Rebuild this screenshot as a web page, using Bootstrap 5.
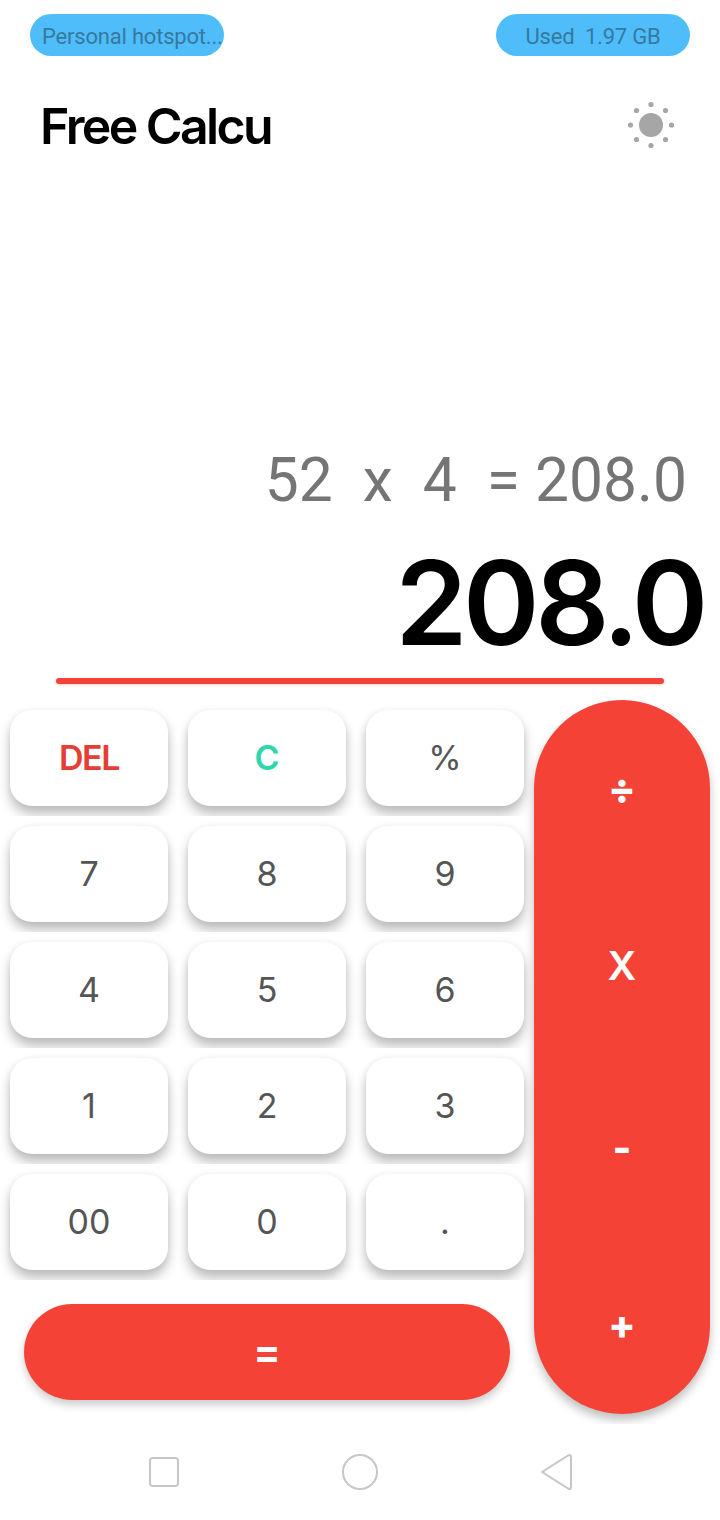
<!DOCTYPE html>
<html lang="en">

<head>
  <meta charset="UTF-8">
  <meta name="viewport" content="width=device-width, initial-scale=1">
  <title>Free Calcu</title>
  <link href="https://cdn.jsdelivr.net/npm/bootstrap@5.3.0/dist/css/bootstrap.min.css" rel="stylesheet">
  <style>
    body {
      background-color: #fff;
      font-family: "Inter", "Open Sans", sans-serif;
      overflow: hidden;
    }

    .phone {
      width: 720px;
      height: 1520px;
    }

    .status-row {
      height: 70px;
      padding: 14px 30px 0;
    }

    .status-pill {
      width: 194px;
      height: 42px;
      line-height: 45px;
      border-radius: 21px;
      background-color: #4fbdfa;
      color: #36799f;
      font-family: "Roboto", sans-serif;
      font-size: 22px;
      text-align: center;
      white-space: pre;
      overflow: hidden;
      letter-spacing: -0.2px;
    }

    .pill-left {
      text-align: left;
      padding-left: 12px;
    }

    .title-row {
      height: 112px;
      padding: 0 45px 0 40px;
    }

    .app-title {
      font-weight: 600;
      font-size: 50px;
      letter-spacing: -2.6px;
      color: #000;
      margin: 0;
    }

    .sun-icon {
      margin-top: -2px;
    }

    .display-area {
      height: 518px;
      padding-bottom: 16px;
    }

    .expr-text {
      font-family: "Roboto", sans-serif;
      font-size: 60.5px;
      line-height: 70px;
      color: #757575;
      white-space: pre;
      padding-right: 33px;
      margin-bottom: 20px;
    }

    .result-text {
      font-weight: 600;
      font-size: 116px;
      line-height: 134px;
      letter-spacing: -4.4px;
      color: #000;
      padding-right: 16px;
      margin-bottom: 8px;
    }

    .red-line {
      height: 6px;
      margin: 0 56px;
      border-radius: 3px;
      background-color: #f44336;
      box-shadow: 0 1px 3px rgba(244, 67, 54, .25);
    }

    .pad-area {
      height: 724px;
    }

    .pad-left {
      width: 534px;
    }

    .key-cell {
      height: 116px;
      padding: 10px;
      overflow: hidden;
    }

    .key-btn {
      width: 158px;
      height: 96px;
      border: 0;
      border-radius: 22px;
      background-color: #fff;
      box-shadow: 0 8px 12px rgba(0, 0, 0, .26), 0 0 6px rgba(0, 0, 0, .06);
      font-size: 34px;
      font-weight: 400;
      color: #555;
      padding: 0 0 2px;
    }

    .key-del {
      color: #e53e35;
      font-weight: 600;
      letter-spacing: -1.5px;
    }

    .key-clear {
      color: #2ed6ad;
      font-weight: 600;
    }

    .equal-wrap {
      padding: 24px 24px 0;
    }

    .equal-btn {
      width: 486px;
      height: 96px;
      border: 0;
      border-radius: 48px;
      background-color: #f44336;
      color: #fff;
      font-size: 40px;
      font-weight: 700;
      box-shadow: 0 5px 8px rgba(0, 0, 0, .2);
    }

    .side-wrap {
      width: 196px;
      margin-left: -10px;
      padding: 0 10px 10px;
      overflow: hidden;
    }

    .side-pill {
      height: 714px;
      border-radius: 88px;
      background-color: #f44336;
      box-shadow: 0 6px 10px rgba(0, 0, 0, .25);
    }

    .op-btn {
      border: 0;
      background: transparent;
      color: #fff;
      font-size: 40px;
      font-weight: 600;
      padding: 0;
      line-height: 1;
    }

    .op-bold {
      font-weight: 800;
    }

    .op-times {
      margin-bottom: 4px;
    }

    .nav-strip {
      height: 96px;
    }

    .nav-icon {
      position: absolute;
    }
  </style>
</head>

<body>
  <div class="phone d-flex flex-column">
    <div class="status-row d-flex justify-content-between">
      <div class="status-pill pill-left">Personal hotspot...</div>
      <div class="status-pill">Used  1.97 GB</div>
    </div>

    <div class="title-row d-flex justify-content-between align-items-center">
      <h1 class="app-title">Free Calcu</h1>
      <svg class="sun-icon" width="48" height="48" viewBox="0 0 48 48" fill="#a6a6a6">
        <circle cx="24" cy="24" r="12" />
        <circle cx="24" cy="3.500" r="2.600" />
        <circle cx="24" cy="44.500" r="2.600" />
        <circle cx="3.500" cy="24" r="2.600" />
        <circle cx="44.500" cy="24" r="2.600" />
        <circle cx="9.500" cy="9.500" r="2.600" />
        <circle cx="38.500" cy="9.500" r="2.600" />
        <circle cx="9.500" cy="38.500" r="2.600" />
        <circle cx="38.500" cy="38.500" r="2.600" />
      </svg>
    </div>

    <div class="display-area d-flex flex-column justify-content-end text-end">
      <div class="expr-text">52  x  4  = 208.0</div>
      <div class="result-text">208.0</div>
      <div class="red-line"></div>
    </div>

    <div class="pad-area d-flex">
      <div class="pad-left">
        <div class="row g-0" id="keys"></div>
        <div class="equal-wrap">
          <button type="button" class="btn equal-btn">=</button>
        </div>
      </div>
      <div class="side-wrap">
        <div class="side-pill d-flex flex-column">
          <div class="flex-fill d-flex align-items-center justify-content-center"><button type="button" class="op-btn op-bold">÷</button></div>
          <div class="flex-fill d-flex align-items-center justify-content-center"><button type="button" class="op-btn op-times">X</button></div>
          <div class="flex-fill d-flex align-items-center justify-content-center"><button type="button" class="op-btn op-bold">-</button></div>
          <div class="flex-fill d-flex align-items-center justify-content-center"><button type="button" class="op-btn op-bold">+</button></div>
        </div>
      </div>
    </div>

    <div class="nav-strip d-flex align-items-center">
      <svg class="nav-icon" style="left:148px" width="32" height="32" viewBox="0 0 32 32" fill="none" stroke="#c6c6c6" stroke-width="2">
        <rect x="2" y="2" width="28" height="28" rx="3" />
      </svg>
      <svg class="nav-icon" style="left:340px" width="40" height="40" viewBox="0 0 40 40" fill="none" stroke="#c6c6c6" stroke-width="2">
        <circle cx="20" cy="20" r="17" />
      </svg>
      <svg class="nav-icon" style="left:538px" width="36" height="40" viewBox="0 0 36 40" fill="none" stroke="#c6c6c6" stroke-width="2" stroke-linejoin="round">
        <path d="M4 20 L30 3.500 Q33 2 33 5 L33 35 Q33 38 30 36.500 Z" />
      </svg>
    </div>
  </div>

  <script>
    const keys = ['DEL', 'C', '%', '7', '8', '9', '4', '5', '6', '1', '2', '3', '00', '0', '.'];
    const extra = { DEL: 'key-del', C: 'key-clear' };
    document.getElementById('keys').innerHTML = keys.map(k => `
      <div class="col-4 key-cell">
        <button type="button" class="btn key-btn ${extra[k] || ''}">${k}</button>
      </div>`).join('');
  </script>
  <script src="https://cdn.jsdelivr.net/npm/bootstrap@5.3.0/dist/js/bootstrap.bundle.min.js"></script>
</body>

</html>
